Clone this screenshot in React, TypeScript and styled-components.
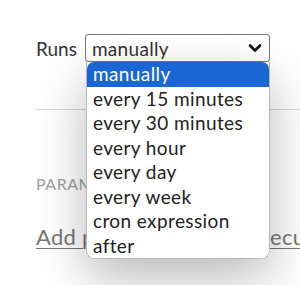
import React from "react";
import styled, { createGlobalStyle } from "styled-components";

const Global = createGlobalStyle`
  html, body { margin: 0; padding: 0; background: #fff; }
  body { width: 300px; height: 285px; overflow: hidden; font-family: Lato, "Noto Sans", sans-serif; }
`;

const Page = styled.div`
  position: relative;
  width: 300px;
  height: 285px;
  overflow: hidden;
  padding: 34px 0 0 36px;
  box-sizing: border-box;
`;

const RunsRow = styled.div`
  display: flex;
  align-items: center;
  gap: 8px;
  height: 28px;
`;

const Label = styled.span`
  font-size: 19px;
  color: #333;
`;

const SelectWrap = styled.div`
  position: relative;
  width: 185px;
`;

const SelectBox = styled.div`
  box-sizing: border-box;
  height: 28px;
  width: 185px;
  border: 1px solid #777;
  border-radius: 3px;
  display: flex;
  align-items: center;
  justify-content: space-between;
  padding: 0 7px 0 6px;
  font-size: 19px;
  letter-spacing: 0.3px;
  color: #333;
`;

const Divider = styled.hr`
  border: none;
  border-top: 1px solid #d6d6d6;
  margin: 47px 0 0 0;
`;

const SectionLabel = styled.div`
  margin-top: 64px;
  font-size: 16px;
  color: #a0a0a0;
  letter-spacing: 0.5px;
`;

const AddLink = styled.a`
  display: block;
  margin-top: 30px;
  font-size: 22px;
  letter-spacing: 0.3px;
  color: #777;
  text-decoration: underline;
  text-decoration-thickness: 1px;
  text-underline-offset: 3px;
  white-space: nowrap;
`;

const Menu = styled.ul`
  position: absolute;
  top: 28px;
  left: 1px;
  width: 182px;
  margin: 0;
  padding: 0;
  list-style: none;
  background: #fff;
  border: 1px solid #b8b8b8;
  border-top: none;
  border-radius: 0 0 9px 9px;
  overflow: hidden;
  box-shadow: 0 18px 50px rgba(0, 0, 0, 0.28);
  z-index: 2;
`;

const Option = styled.li<{ $active?: boolean }>`
  height: 24.5px;
  line-height: 24.5px;
  padding-left: 6px;
  font-size: 19px;
  letter-spacing: 0.4px;
  white-space: nowrap;
  color: ${(p) => (p.$active ? "#fff" : "#222")};
  background: ${(p) => (p.$active ? "#1a66d3" : "#fff")};
  border-radius: ${(p) => (p.$active ? "7px 7px 0 0" : "0")};
`;

const options = [
  "manually",
  "every 15 minutes",
  "every 30 minutes",
  "every hour",
  "every day",
  "every week",
  "cron expression",
  "after",
];

const Chevron = () => (
  <svg width="14" height="10" viewBox="0 0 14 10">
    <path d="M2 2.5 L7 7.5 L12 2.5" fill="none" stroke="#111" strokeWidth="2.6" strokeLinecap="round" strokeLinejoin="round" />
  </svg>
);

export default function App() {
  return (
    <>
      <Global />
      <Page>
        <RunsRow>
          <Label>Runs</Label>
          <SelectWrap>
            <SelectBox>
              <span>manually</span>
              <Chevron />
            </SelectBox>
            <Menu>
              {options.map((o, i) => (
                <Option key={o} $active={i === 0}>
                  {o}
                </Option>
              ))}
            </Menu>
          </SelectWrap>
        </RunsRow>
        <Divider />
        <SectionLabel>PARAMETERS</SectionLabel>
        <AddLink>Add parameter for the recurring run</AddLink>
      </Page>
    </>
  );
}
